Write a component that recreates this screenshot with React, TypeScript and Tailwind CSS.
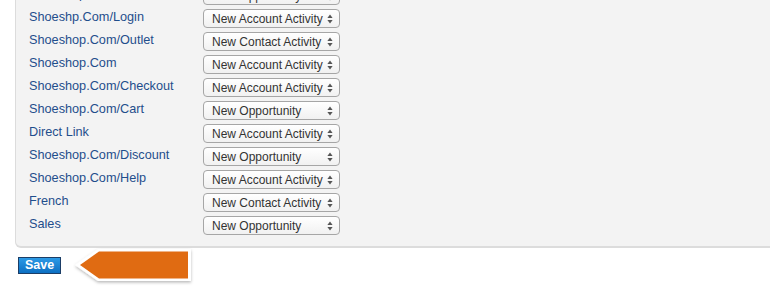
import React from "react";

const rows: [string, string][] = [
  ["Shoeshop.Com/Account", "New Opportunity"],
  ["Shoeshp.Com/Login", "New Account Activity"],
  ["Shoeshop.Com/Outlet", "New Contact Activity"],
  ["Shoeshop.Com", "New Account Activity"],
  ["Shoeshop.Com/Checkout", "New Account Activity"],
  ["Shoeshop.Com/Cart", "New Opportunity"],
  ["Direct Link", "New Account Activity"],
  ["Shoeshop.Com/Discount", "New Opportunity"],
  ["Shoeshop.Com/Help", "New Account Activity"],
  ["French", "New Contact Activity"],
  ["Sales", "New Opportunity"],
];

function Sel({ value }: { value: string }) {
  return (
    <div className="relative flex h-[19px] w-[137px] items-center rounded-[4px] border border-[#a6a6a6] bg-gradient-to-b from-[#ffffff] to-[#f1f1f1] pl-[8px] text-[12px] leading-none text-[#333]">
      <span>{value}</span>
      <svg className="absolute right-[6px] top-[4px]" width="6" height="10" viewBox="0 0 6 10">
        <path d="M3 0.5 L5.6 4 L0.4 4 Z" fill="#555" />
        <path d="M3 9.5 L5.6 6 L0.4 6 Z" fill="#555" />
      </svg>
    </div>
  );
}

export default function App() {
  return (
    <div
      className="h-[300px] w-[770px] overflow-hidden bg-white"
      style={{ fontFamily: '"Liberation Sans", Arial, sans-serif' }}
    >
      <div className="-mt-[21px] ml-[15px] rounded-bl-[6px] border-b-2 border-l border-[#dcdcdc] bg-[#f3f3f3] pb-[10px] pl-[13px] pt-[4px]">
        {rows.map(([label, val], i) => (
          <div key={i} className="flex h-[23px] items-center">
            <div className="w-[174px] text-[12.7px] text-[#1f4e8c]">{label}</div>
            <div className="pt-[2px]">
              <Sel value={val} />
            </div>
          </div>
        ))}
      </div>
      <div className="-mt-[1px] flex items-center">
        <button className="ml-[18px] flex h-[17px] w-[43px] items-center justify-center border border-[#1b3d66] bg-gradient-to-b from-[#2c9ae6] to-[#0b6fc2] text-[12.5px] font-bold leading-none text-white">
          Save
        </button>
        <svg width="124" height="36" viewBox="0 0 124 36" className="ml-[11px]" style={{ overflow: "visible" }}>
          <defs>
            <filter id="sh" x="-10%" y="-20%" width="120%" height="150%">
              <feDropShadow dx="0" dy="1.5" stdDeviation="1.8" floodColor="#000" floodOpacity="0.28" />
            </filter>
          </defs>
          <path d="M3 18 L26 2 L119 2 L119 34 L26 34 Z" fill="#ffffff" filter="url(#sh)" />
          <path d="M8 18 L27 4.5 L116 4.5 L116 31.5 L27 31.5 Z" fill="#e06b12" />
        </svg>
      </div>
    </div>
  );
}
